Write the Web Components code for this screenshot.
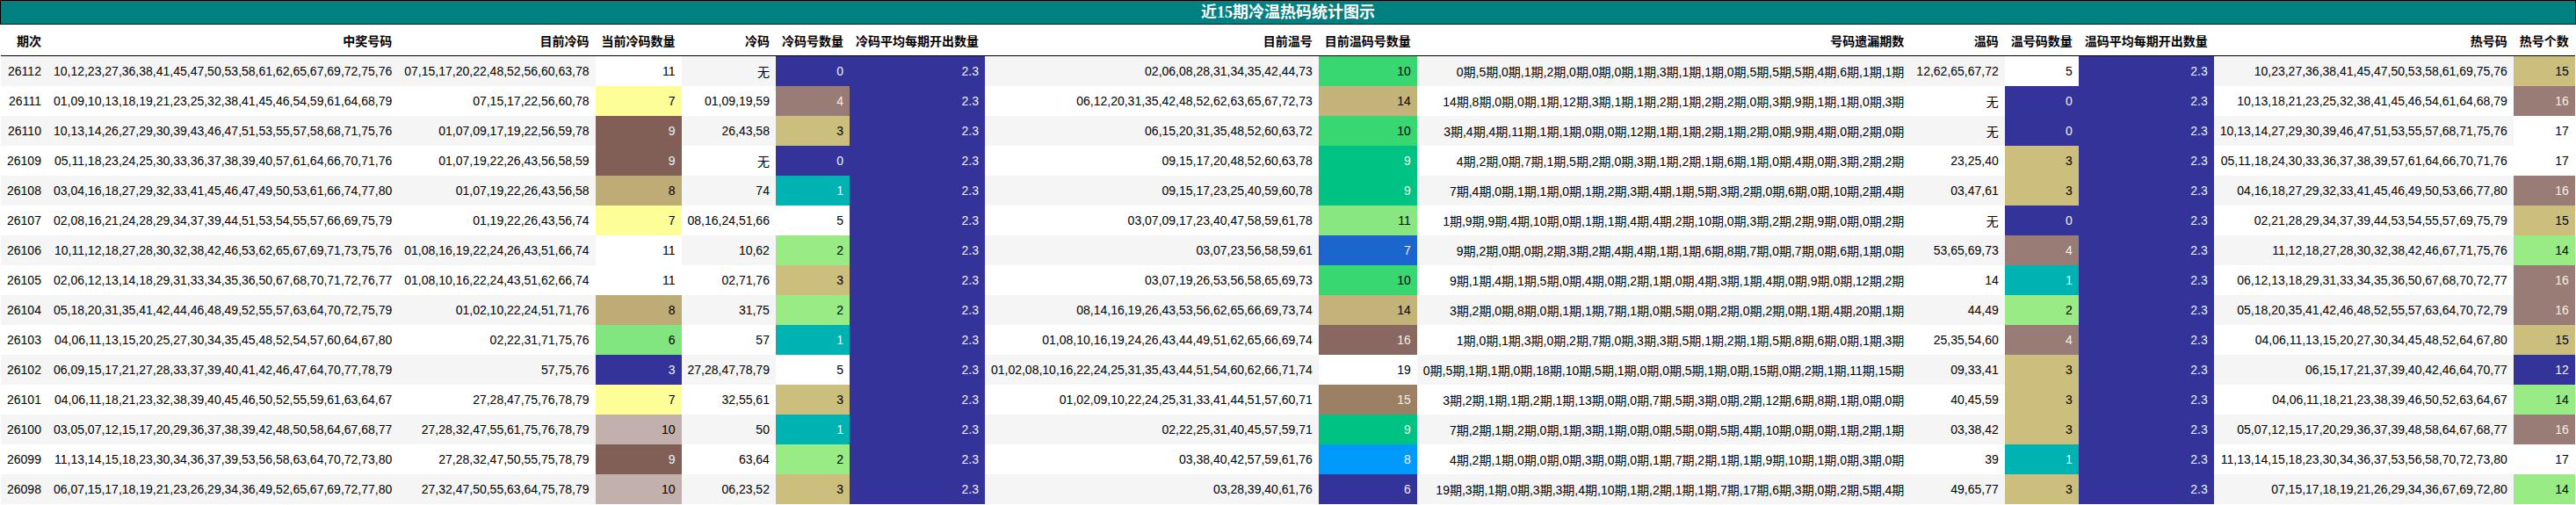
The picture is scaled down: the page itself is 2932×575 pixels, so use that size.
<!DOCTYPE html>
<html lang="zh">
<head>
<meta charset="utf-8">
<title>近15期冷温热码统计图示</title>
<style>
html,body{margin:0;padding:0;background:#fff;}
</style>
</head>
<body>
<stat-report>
  <stat-title>近15期冷温热码统计图示</stat-title>
  <stat-table></stat-table>
</stat-report>
<script>
const HEAD=['期次','中奖号码','目前冷码','当前冷码数量','冷码','冷码号数量','冷码平均每期开出数量','目前温号','目前温码号数量','号码遗漏期数','温码','温号码数量','温码平均每期开出数量','热号码','热号个数'];
const ROWS=[
['26112','10,12,23,27,36,38,41,45,47,50,53,58,61,62,65,67,69,72,75,76','07,15,17,20,22,48,52,56,60,63,78',11,'无',0,'2.3','02,06,08,28,31,34,35,42,44,73',10,'0,5,0,1,2,0,0,0,1,3,1,1,0,5,5,5,4,6,1,1','12,62,65,67,72',5,'2.3','10,23,27,36,38,41,45,47,50,53,58,61,69,75,76',15],
['26111','01,09,10,13,18,19,21,23,25,32,38,41,45,46,54,59,61,64,68,79','07,15,17,22,56,60,78',7,'01,09,19,59',4,'2.3','06,12,20,31,35,42,48,52,62,63,65,67,72,73',14,'14,8,0,0,1,12,3,1,1,2,1,2,2,0,3,9,1,1,0,3','无',0,'2.3','10,13,18,21,23,25,32,38,41,45,46,54,61,64,68,79',16],
['26110','10,13,14,26,27,29,30,39,43,46,47,51,53,55,57,58,68,71,75,76','01,07,09,17,19,22,56,59,78',9,'26,43,58',3,'2.3','06,15,20,31,35,48,52,60,63,72',10,'3,4,4,11,1,1,0,0,12,1,1,2,1,2,0,9,4,0,2,0','无',0,'2.3','10,13,14,27,29,30,39,46,47,51,53,55,57,68,71,75,76',17],
['26109','05,11,18,23,24,25,30,33,36,37,38,39,40,57,61,64,66,70,71,76','01,07,19,22,26,43,56,58,59',9,'无',0,'2.3','09,15,17,20,48,52,60,63,78',9,'4,2,0,7,1,5,2,0,3,1,2,1,6,1,0,4,0,3,2,2','23,25,40',3,'2.3','05,11,18,24,30,33,36,37,38,39,57,61,64,66,70,71,76',17],
['26108','03,04,16,18,27,29,32,33,41,45,46,47,49,50,53,61,66,74,77,80','01,07,19,22,26,43,56,58',8,'74',1,'2.3','09,15,17,23,25,40,59,60,78',9,'7,4,0,1,1,0,1,2,3,4,1,5,3,2,0,6,0,10,2,4','03,47,61',3,'2.3','04,16,18,27,29,32,33,41,45,46,49,50,53,66,77,80',16],
['26107','02,08,16,21,24,28,29,34,37,39,44,51,53,54,55,57,66,69,75,79','01,19,22,26,43,56,74',7,'08,16,24,51,66',5,'2.3','03,07,09,17,23,40,47,58,59,61,78',11,'1,9,9,4,10,0,1,1,4,4,2,10,0,3,2,2,9,0,0,2','无',0,'2.3','02,21,28,29,34,37,39,44,53,54,55,57,69,75,79',15],
['26106','10,11,12,18,27,28,30,32,38,42,46,53,62,65,67,69,71,73,75,76','01,08,16,19,22,24,26,43,51,66,74',11,'10,62',2,'2.3','03,07,23,56,58,59,61',7,'9,2,0,0,2,3,2,4,4,1,1,6,8,7,0,7,0,6,1,0','53,65,69,73',4,'2.3','11,12,18,27,28,30,32,38,42,46,67,71,75,76',14],
['26105','02,06,12,13,14,18,29,31,33,34,35,36,50,67,68,70,71,72,76,77','01,08,10,16,22,24,43,51,62,66,74',11,'02,71,76',3,'2.3','03,07,19,26,53,56,58,65,69,73',10,'9,1,4,1,5,0,4,0,2,1,0,4,3,1,4,0,9,0,12,2','14',1,'2.3','06,12,13,18,29,31,33,34,35,36,50,67,68,70,72,77',16],
['26104','05,18,20,31,35,41,42,44,46,48,49,52,55,57,63,64,70,72,75,79','01,02,10,22,24,51,71,76',8,'31,75',2,'2.3','08,14,16,19,26,43,53,56,62,65,66,69,73,74',14,'3,2,0,8,0,1,1,7,1,0,5,0,2,0,2,0,1,4,20,1','44,49',2,'2.3','05,18,20,35,41,42,46,48,52,55,57,63,64,70,72,79',16],
['26103','04,06,11,13,15,20,25,27,30,34,35,45,48,52,54,57,60,64,67,80','02,22,31,71,75,76',6,'57',1,'2.3','01,08,10,16,19,24,26,43,44,49,51,62,65,66,69,74',16,'1,0,1,3,0,2,7,0,3,3,5,1,2,1,5,8,6,0,1,3','25,35,54,60',4,'2.3','04,06,11,13,15,20,27,30,34,45,48,52,64,67,80',15],
['26102','06,09,15,17,21,27,28,33,37,39,40,41,42,46,47,64,70,77,78,79','57,75,76',3,'27,28,47,78,79',5,'2.3','01,02,08,10,16,22,24,25,31,35,43,44,51,54,60,62,66,71,74',19,'0,5,1,1,0,18,10,5,1,0,0,5,1,0,15,0,2,1,11,15','09,33,41',3,'2.3','06,15,17,21,37,39,40,42,46,64,70,77',12],
['26101','04,06,11,18,21,23,32,38,39,40,45,46,50,52,55,59,61,63,64,67','27,28,47,75,76,78,79',7,'32,55,61',3,'2.3','01,02,09,10,22,24,25,31,33,41,44,51,57,60,71',15,'3,2,1,1,2,1,13,0,0,7,5,3,0,2,12,6,8,1,0,0','40,45,59',3,'2.3','04,06,11,18,21,23,38,39,46,50,52,63,64,67',14],
['26100','03,05,07,12,15,17,20,29,36,37,38,39,42,48,50,58,64,67,68,77','27,28,32,47,55,61,75,76,78,79',10,'50',1,'2.3','02,22,25,31,40,45,57,59,71',9,'7,2,1,2,0,1,3,1,0,0,5,0,5,4,10,0,0,1,2,1','03,38,42',3,'2.3','05,07,12,15,17,20,29,36,37,39,48,58,64,67,68,77',16],
['26099','11,13,14,15,18,23,30,34,36,37,39,53,56,58,63,64,70,72,73,80','27,28,32,47,50,55,75,78,79',9,'63,64',2,'2.3','03,38,40,42,57,59,61,76',8,'4,2,1,0,0,0,3,0,0,1,7,2,1,1,9,10,1,0,3,0','39',1,'2.3','11,13,14,15,18,23,30,34,36,37,53,56,58,70,72,73,80',17],
['26098','06,07,15,17,18,19,21,23,26,29,34,36,49,52,65,67,69,72,77,80','27,32,47,50,55,63,64,75,78,79',10,'06,23,52',3,'2.3','03,28,39,40,61,76',6,'19,3,1,0,3,3,4,10,1,2,1,1,7,17,6,3,0,2,5,4','49,65,77',3,'2.3','07,15,17,18,19,21,26,29,34,36,67,69,72,80',14]
];
const GRADIENT=[3,5,6,8,11,12,14];
const STOPS=[[0,.2,.2,.6],[.15,0,.6,1],[.25,0,.8,.4],[.5,1,1,.6],[.75,.5,.36,.33],[1,1,1,1]];
function terrain(v){
  const x=Math.min(255,Math.floor(v*256))/255;
  let i=0;
  while(i<STOPS.length-2&&x>STOPS[i+1][0])i++;
  const a=STOPS[i],b=STOPS[i+1],t=(x-a[0])/(b[0]-a[0]);
  return [1,2,3].map(k=>a[k]+(b[k]-a[k])*t);
}
function lin(c){return c<=.03928?c/12.92:Math.pow((c+.055)/1.055,2.4);}
function gradientStyle(n,min,max){
  const v=max===min?0:(n-min)/(max-min);
  const c=terrain(v);
  const L=.2126*lin(c[0])+.7152*lin(c[1])+.0722*lin(c[2]);
  const hex=c.map(x=>Math.round(x*255).toString(16).padStart(2,'0')).join('');
  return `background:#${hex};color:${L<.408?'#f1f1f1':'#000'}`;
}
class StatReport extends HTMLElement{
  constructor(){
    super();
    this.attachShadow({mode:'open'}).innerHTML=`<style>
      :host{display:block;width:2932px;background:#fff;color:#000;font:14px "Liberation Sans","Noto Sans CJK SC",sans-serif;}
    </style><slot></slot>`;
  }
}
class StatTitle extends HTMLElement{
  constructor(){
    super();
    this.attachShadow({mode:'open'}).innerHTML=`<style>
      :host{display:block;box-sizing:border-box;height:28px;background:#008080;color:#fff;border:1px solid #000;text-align:center;
        font:bold 18px/26px "Liberation Serif","Noto Sans CJK SC",serif;}
    </style><slot></slot>`;
  }
}
class StatTable extends HTMLElement{
  constructor(){
    super();
    const root=this.attachShadow({mode:'open'});
    const cols=new Map(GRADIENT.map(c=>{
      const vals=ROWS.map(r=>+r[c]);
      return [c,[Math.min(...vals),Math.max(...vals)]];
    }));
    const th=HEAD.map(h=>`<th>${h}</th>`).join('');
    const tr=ROWS.map(r=>'<tr>'+r.map((val,c)=>{
      if(c===9){val=val.split(',').map(x=>x+'期').join(',');}
      if(c===6||c===12) return `<td style="${gradientStyle(0,0,0)}">${val}</td>`;
      if(cols.has(c)){const [a,b]=cols.get(c);return `<td style="${gradientStyle(val,a,b)}">${val}</td>`;}
      return `<td>${val}</td>`;
    }).join('')+'</tr>').join('');
    root.innerHTML=`<style>
      :host{display:block;padding:1px 1px 0;}
      table{border-collapse:collapse;border-spacing:0;color:#000;font:inherit;}
      thead{border-bottom:1px solid #000;}
      th,td{padding:7px;text-align:right;vertical-align:middle;white-space:nowrap;font-weight:normal;line-height:normal;}
      th{font-weight:bold;}
      tbody tr:nth-child(odd){background:#f5f5f5;}
    </style><table><thead><tr>${th}</tr></thead><tbody>${tr}</tbody></table>`;
  }
}
customElements.define('stat-report',StatReport);
customElements.define('stat-title',StatTitle);
customElements.define('stat-table',StatTable);
</script>
</body>
</html>
